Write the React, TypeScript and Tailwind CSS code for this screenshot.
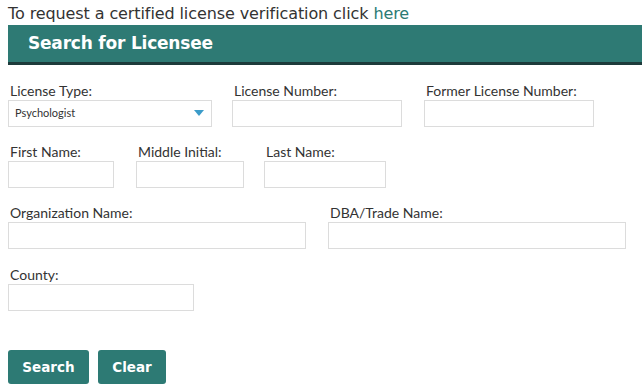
const rows = [
  [
    { label: "License Type:", w: "w-[204px]", select: true },
    { label: "License Number:", w: "w-[170px] ml-[20px]" },
    { label: "Former License Number:", w: "w-[170px] ml-[22px]" },
  ],
  [
    { label: "First Name:", w: "w-[106px]" },
    { label: "Middle Initial:", w: "w-[108px] ml-[22px]" },
    { label: "Last Name:", w: "w-[122px] ml-[20px]" },
  ],
  [
    { label: "Organization Name:", w: "w-[298px]" },
    { label: "DBA/Trade Name:", w: "w-[298px] ml-[22px]" },
  ],
  [{ label: "County:", w: "w-[186px] mt-[1px]" }],
];

type Field = { label: string; w: string; select?: boolean };

function FormField({ field }: { field: Field }) {
  return (
    <div className={field.w}>
      <div className="pl-[2px] text-[14px] leading-[16px] text-[#333] font-['Lato',sans-serif]">
        {field.label}
      </div>
      <div className="mt-[1px] h-[27px] border border-[#dcdcdc] bg-white flex items-center justify-between px-[6px]">
        {field.select && (
          <>
            <span className="text-[11px] text-[#333] font-['Lato',sans-serif]">Psychologist</span>
            <svg width="10" height="7" viewBox="0 0 10 7" className="mr-[1px]">
              <path d="M0 0h10L5 6z" fill="#3c9cc9" />
            </svg>
          </>
        )}
      </div>
    </div>
  );
}

export default function App() {
  return (
    <div className="w-[642px] h-[391px] bg-white overflow-hidden pl-[8px]">
      <p className="h-[25px] leading-[27px] text-[16px] text-[#333] font-['DejaVu_Sans',sans-serif] tracking-[-0.1px]">
        To request a certified license verification click{" "}
        <a className="text-[#2c7a74]">here</a>
      </p>
      <div className="h-[40px] bg-[#2e7a74] border-b-[3px] border-[#1d3b3b] flex items-center pl-[20px]">
        <h2 className="text-[17px] font-bold text-white font-['DejaVu_Sans',sans-serif] tracking-[-0.2px]">
          Search for Licensee
        </h2>
      </div>
      <div className="mt-[18px] flex flex-col gap-[17px]">
        {rows.map((row, i) => (
          <div key={i} className="flex">
            {row.map((f) => (
              <FormField key={f.label} field={f} />
            ))}
          </div>
        ))}
      </div>
      <div className="mt-[39px] flex gap-[9px] font-['DejaVu_Sans',sans-serif]">
        <button className="w-[81px] h-[34px] rounded-[3px] bg-[#2d7a74] text-white text-[13.5px] font-bold">
          Search
        </button>
        <button className="w-[68px] h-[34px] rounded-[3px] bg-[#2d7a74] text-white text-[13.5px] font-bold">
          Clear
        </button>
      </div>
    </div>
  );
}
